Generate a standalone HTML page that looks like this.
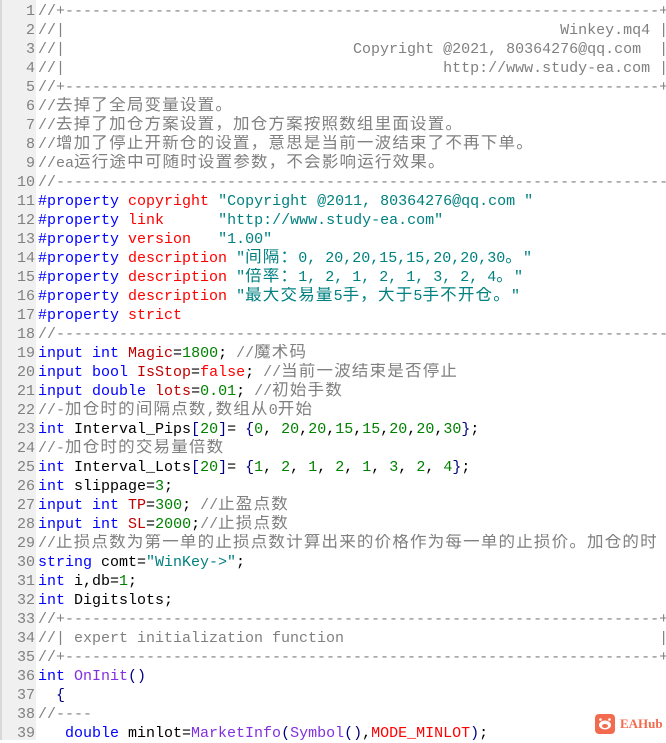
<!DOCTYPE html>
<html><head><meta charset="utf-8"><style>
body{margin:0;width:666px;height:740px;overflow:hidden;background:#fff;position:relative;font-family:"Liberation Mono","Noto Sans CJK SC",monospace;font-size:15px;}
#g{position:absolute;left:0;top:0;width:36px;height:740px;background:#f0f0f0;border-left:2px solid #d8d8d8;box-sizing:border-box;}
#n{position:absolute;left:0;top:2px;width:35px;text-align:right;color:#808080;}
#c{position:absolute;left:38px;top:2px;}
.l{height:19px;line-height:19px;white-space:pre;overflow:hidden;}
.m{color:#808080}.k{color:#0000ff}.p{color:#ff0000}.s{color:#008080}.v{color:#c00000}.d{color:#008000}.f{color:#8030e0}.b{color:#000080}
.z{font-family:"Noto Sans CJK SC",sans-serif;font-size:16.5px;letter-spacing:1.2px;line-height:0;}
#logo{position:absolute;left:595px;top:714px;width:20px;height:20px;background:#f26b4f;border-radius:4px;}
#lt{position:absolute;left:620px;top:714px;color:#f26b4f;font:bold 13px "Liberation Serif",serif;line-height:20px;}
</style></head><body>
<div id="g"></div>
<div id="n"><div class="l">1</div><div class="l">2</div><div class="l">3</div><div class="l">4</div><div class="l">5</div><div class="l">6</div><div class="l">7</div><div class="l">8</div><div class="l">9</div><div class="l">10</div><div class="l">11</div><div class="l">12</div><div class="l">13</div><div class="l">14</div><div class="l">15</div><div class="l">16</div><div class="l">17</div><div class="l">18</div><div class="l">19</div><div class="l">20</div><div class="l">21</div><div class="l">22</div><div class="l">23</div><div class="l">24</div><div class="l">25</div><div class="l">26</div><div class="l">27</div><div class="l">28</div><div class="l">29</div><div class="l">30</div><div class="l">31</div><div class="l">32</div><div class="l">33</div><div class="l">34</div><div class="l">35</div><div class="l">36</div><div class="l">37</div><div class="l">38</div><div class="l">39</div></div>
<div id="c">
<div class="l m">//+------------------------------------------------------------------+</div>
<div class="l m">//|                                                       Winkey.mq4 |</div>
<div class="l m">//|                                Copyright @2021, 80364276@qq.com  |</div>
<div class="l m">//|                                          http://www.study-ea.com |</div>
<div class="l m">//+------------------------------------------------------------------+</div>
<div class="l m">//<span class="z">去掉了全局变量设置。</span></div>
<div class="l m">//<span class="z">去掉了加仓方案设置，加仓方案按照数组里面设置。</span></div>
<div class="l m">//<span class="z">增加了停止开新仓的设置，意思是当前一波结束了不再下单。</span></div>
<div class="l m">//ea<span class="z">运行途中可随时设置参数，不会影响运行效果。</span></div>
<div class="l m">//--------------------------------------------------------------------</div>
<div class="l"><span class="k">#property</span> <span class="p">copyright</span> <span class="s">"Copyright @2011, 80364276@qq.com "</span></div>
<div class="l"><span class="k">#property</span> <span class="p">link</span>      <span class="s">"http://www.study-ea.com"</span></div>
<div class="l"><span class="k">#property</span> <span class="p">version</span>   <span class="s">"1.00"</span></div>
<div class="l"><span class="k">#property</span> <span class="p">description</span> <span class="s">"<span class="z">间隔：</span>0, 20,20,15,15,20,20,30<span class="z">。</span>"</span></div>
<div class="l"><span class="k">#property</span> <span class="p">description</span> <span class="s">"<span class="z">倍率：</span>1, 2, 1, 2, 1, 3, 2, 4<span class="z">。</span>"</span></div>
<div class="l"><span class="k">#property</span> <span class="p">description</span> <span class="s">"<span class="z">最大交易量</span>5<span class="z">手，大于</span>5<span class="z">手不开仓。</span>"</span></div>
<div class="l"><span class="k">#property</span> <span class="p">strict</span></div>
<div class="l m">//--------------------------------------------------------------------</div>
<div class="l"><span class="k">input int</span> <span class="v">Magic</span>=<span class="d">1800</span>; <span class="m">//<span class="z">魔术码</span></span></div>
<div class="l"><span class="k">input bool</span> <span class="v">IsStop</span>=<span class="p">false</span>; <span class="m">//<span class="z">当前一波结束是否停止</span></span></div>
<div class="l"><span class="k">input double</span> <span class="v">lots</span>=<span class="d">0.01</span>; <span class="m">//<span class="z">初始手数</span></span></div>
<div class="l m">//-<span class="z">加仓时的间隔点数</span>,<span class="z">数组从</span>0<span class="z">开始</span></div>
<div class="l"><span class="k">int</span> Interval_Pips<span class="b">[</span><span class="d">20</span><span class="b">]</span>= <span class="b">{</span><span class="d">0</span>, <span class="d">20</span>,<span class="d">20</span>,<span class="d">15</span>,<span class="d">15</span>,<span class="d">20</span>,<span class="d">20</span>,<span class="d">30</span><span class="b">}</span>;</div>
<div class="l m">//-<span class="z">加仓时的交易量倍数</span></div>
<div class="l"><span class="k">int</span> Interval_Lots<span class="b">[</span><span class="d">20</span><span class="b">]</span>= <span class="b">{</span><span class="d">1</span>, <span class="d">2</span>, <span class="d">1</span>, <span class="d">2</span>, <span class="d">1</span>, <span class="d">3</span>, <span class="d">2</span>, <span class="d">4</span><span class="b">}</span>;</div>
<div class="l"><span class="k">int</span> slippage=<span class="d">3</span>;</div>
<div class="l"><span class="k">input int</span> <span class="v">TP</span>=<span class="d">300</span>; <span class="m">//<span class="z">止盈点数</span></span></div>
<div class="l"><span class="k">input int</span> <span class="v">SL</span>=<span class="d">2000</span>;<span class="m">//<span class="z">止损点数</span></span></div>
<div class="l m">//<span class="z">止损点数为第一单的止损点数计算出来的价格作为每一单的止损价。加仓的时</span></div>
<div class="l"><span class="k">string</span> comt=<span class="s">"WinKey-&gt;"</span>;</div>
<div class="l"><span class="k">int</span> i,db=<span class="d">1</span>;</div>
<div class="l"><span class="k">int</span> Digitslots;</div>
<div class="l m">//+------------------------------------------------------------------+</div>
<div class="l m">//| expert initialization function                                   |</div>
<div class="l m">//+------------------------------------------------------------------+</div>
<div class="l"><span class="k">int</span> <span class="f">OnInit</span><span class="b">()</span></div>
<div class="l">  <span class="b">{</span></div>
<div class="l m">//----</div>
<div class="l">   <span class="k">double</span> minlot=<span class="f">MarketInfo</span><span class="b">(</span><span class="f">Symbol</span><span class="b">()</span>,<span class="p">MODE_MINLOT</span><span class="b">)</span>;</div>
</div>
<div id="logo"><svg width="20" height="20" viewBox="0 0 20 20"><ellipse cx="10" cy="11" rx="6" ry="4.5" fill="#fff"/><ellipse cx="10" cy="12" rx="3" ry="2" fill="#f26b4f"/><circle cx="5.5" cy="5.5" r="1.3" fill="#fff"/><circle cx="14.5" cy="5.5" r="1.3" fill="#fff"/></svg></div>
<div id="lt">EAHub</div>
</body></html>
